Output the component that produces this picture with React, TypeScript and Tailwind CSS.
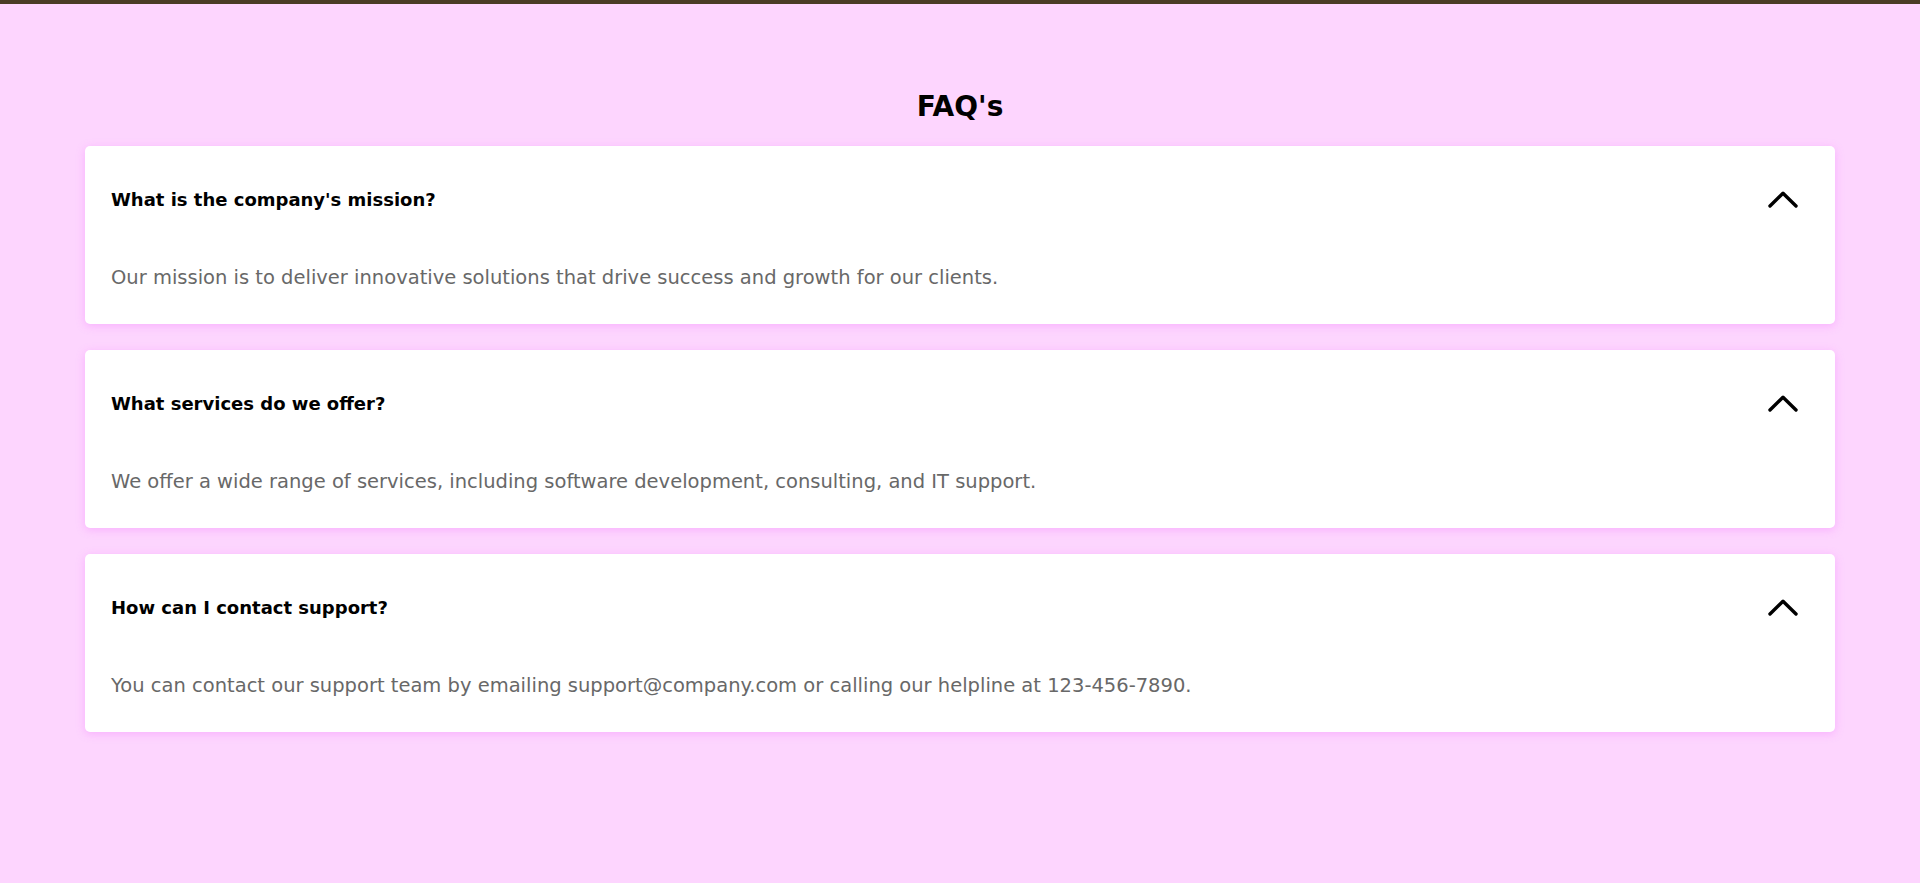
const faqs = [
  {
    q: "What is the company's mission?",
    a: 'Our mission is to deliver innovative solutions that drive success and growth for our clients.',
  },
  {
    q: 'What services do we offer?',
    a: 'We offer a wide range of services, including software development, consulting, and IT support.',
  },
  {
    q: 'How can I contact support?',
    a: 'You can contact our support team by emailing support@company.com or calling our helpline at 123-456-7890.',
  },
]

function ChevronUp() {
  return (
    <svg width="30" height="17" viewBox="0 0 30 17" fill="none">
      <polyline
        points="2,15 15,2.2 28,15"
        stroke="#000"
        strokeWidth="3.4"
        strokeLinecap="round"
        strokeLinejoin="round"
      />
    </svg>
  )
}

export default function App() {
  return (
    <div className="min-h-screen bg-[#fdd5fe] border-t-4 border-[#4b3c25] font-['DejaVu_Sans',sans-serif]">
      <div className="px-[85px] pt-[83px] pb-10">
        <h2 className="text-center text-[28px] leading-[40px] font-bold text-black mb-[19px]">FAQ's</h2>
        <div className="flex flex-col gap-[26px]">
          {faqs.map((item) => (
            <div
              key={item.q}
              className="bg-white rounded-[5px] shadow-[0_2px_8px_rgba(240,110,255,0.35)]"
            >
              <div className="h-[107px] flex items-center justify-between pl-[26px] pr-[37px]">
                <span className="text-[18px] font-bold text-black">{item.q}</span>
                <ChevronUp />
              </div>
              <div className="px-[26px] pt-[13px] pb-[34px] text-[19.5px] leading-[24px] text-[#686868]">
                {item.a}
              </div>
            </div>
          ))}
        </div>
      </div>
    </div>
  )
}
